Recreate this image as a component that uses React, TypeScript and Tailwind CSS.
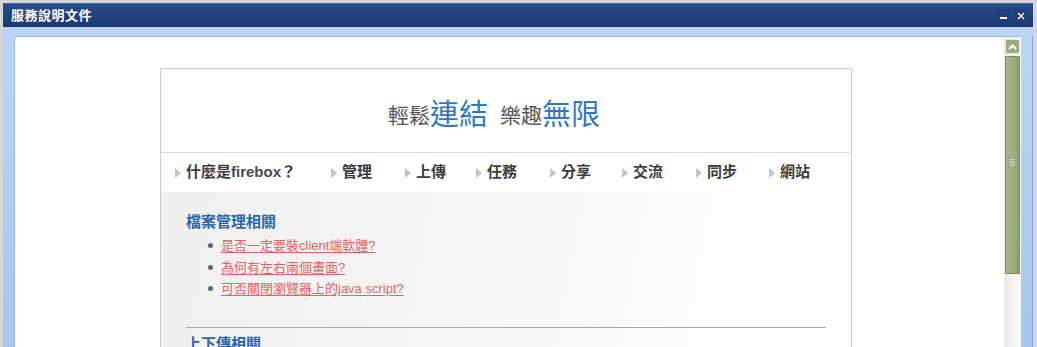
import React from 'react';

const cjk = "font-['Liberation_Sans','Noto_Sans_CJK_TC',sans-serif]";

const navItems = [
  { label: '什麼是', extra: 'firebox', tail: '？', w: 'w-[156px]' },
  { label: '管理', w: 'w-[74px]' },
  { label: '上傳', w: 'w-[71px]' },
  { label: '任務', w: 'w-[74px]' },
  { label: '分享', w: 'w-[72px]' },
  { label: '交流', w: 'w-[74px]' },
  { label: '同步', w: 'w-[73px]' },
  { label: '網站', w: 'w-[73px]' },
];

const links = ['是否一定要裝client端軟體?', '為何有左右兩個畫面?', '可否關閉瀏覽器上的java script?'];

const Arrow = () => (
  <span className="inline-block w-0 h-0 border-y-[5px] border-y-transparent border-l-[6px] border-l-[#c4c4c4] mr-[5px]" />
);

const Scrollbar = () => (
  <div className="w-[17px] bg-[linear-gradient(90deg,#ecebe6,#fbfbf9)] flex flex-col pt-[2px]">
    <div className="h-[15px] mx-[1px] rounded-[2px] border border-[#e8eedd] bg-[#9aac80] flex items-center justify-center">
      <svg width="9" height="6" viewBox="0 0 9 6">
        <path d="M1 5 L4.5 1.5 L8 5" stroke="#fff" strokeWidth="2" fill="none" />
      </svg>
    </div>
    <div className="h-[218px] mt-[2px] mx-[1px] border border-[#7b8e60] bg-[linear-gradient(90deg,#a4b58a,#9bad80_60%,#8c9f70)] flex justify-center pt-[102px]">
      <div className="flex flex-col gap-[1px]">
        <div className="w-[5px] h-[1px] bg-[#cfdab9]" />
        <div className="w-[5px] h-[1px] bg-[#cfdab9]" />
        <div className="w-[5px] h-[1px] bg-[#cfdab9]" />
        <div className="w-[5px] h-[1px] bg-[#cfdab9]" />
      </div>
    </div>
  </div>
);

export default function App() {
  return (
    <div className={`${cjk} w-[1037px] h-[347px] overflow-hidden bg-[#d6d6d6] pl-[3px] pt-[3px] pr-[4px] flex flex-col`}>
      <div className="h-[24px] shrink-0 border-t border-[#3d63a6] bg-[linear-gradient(180deg,#2a4d8c,#1c376c)] flex items-center justify-between pl-[8px] pr-[6px]">
        <span className="text-white text-[13px] font-bold tracking-[0.5px]">服務說明文件</span>
        <div className="flex gap-[4px]">
          <div className="w-[13px] h-[13px] bg-[#203e7a] flex items-end justify-center pb-[3px]">
            <div className="w-[7px] h-[2px] bg-white" />
          </div>
          <div className="w-[13px] h-[13px] bg-[#203e7a] flex items-center justify-center">
            <svg width="8" height="8" viewBox="0 0 8 8">
              <path d="M1 1 L7 7 M7 1 L1 7" stroke="#fff" strokeWidth="1.4" />
            </svg>
          </div>
        </div>
      </div>
      <div className="flex-1 bg-[linear-gradient(180deg,#bcd5f6,#a8c6ee)] flex pl-[11px] pt-[9px] min-h-0">
        <div className="flex-1 border-l border-t border-[#9bbce9] bg-white flex min-h-0">
          <div className="flex-1 pt-[31px] pl-[145px]">
            <div className="w-[692px] border border-[#cccccc] border-b-0">
              <div className="h-[83px] flex items-center justify-center pr-[24px] pt-[10px]">
                <span className="text-[21px] text-[#555]">輕鬆</span>
                <span className="text-[29px] text-[#3078c4] mr-[12px]">連結</span>
                <span className="text-[21px] text-[#555]">樂趣</span>
                <span className="text-[29px] text-[#3078c4]">無限</span>
              </div>
              <div className="h-[40px] border-t border-[#dddddd] flex items-center pl-[14px]">
                {navItems.map((n) => (
                  <div key={n.label} className={`${n.w} flex items-center shrink-0`}>
                    <Arrow />
                    <span className="text-[15px] font-bold text-[#3c3c3c]">
                      {n.label}
                      {n.extra && <span className="text-[#4a4a4a]">{n.extra}</span>}
                      {n.tail}
                    </span>
                  </div>
                ))}
              </div>
              <div className="h-[200px] bg-[linear-gradient(100deg,#f0f0f0_0%,#f6f6f6_45%,#ffffff_85%)] pl-[25px] pr-[25px] pt-[20px]">
                <h3 className="text-[15px] font-bold text-[#2a67ad] leading-[20px]">檔案管理相關</h3>
                <ul className="mt-[3px] pl-[22px]">
                  {links.map((l) => (
                    <li key={l} className="flex items-center h-[21.5px]">
                      <span className="w-[5px] h-[5px] rounded-full bg-[#5a6478] mr-[8px]" />
                      <a className="text-[13px] text-[#e06464] underline underline-offset-[2px]">{l}</a>
                    </li>
                  ))}
                </ul>
                <div className="mt-[27px] border-t border-[#aaaaaa]" />
                <h3 className="mt-[6px] text-[15px] font-bold text-[#2a67ad] leading-[20px]">上下傳相關</h3>
              </div>
            </div>
          </div>
          <Scrollbar />
        </div>
        <div className="w-[12px] border-r border-[#7fa6de]" />
      </div>
    </div>
  );
}
